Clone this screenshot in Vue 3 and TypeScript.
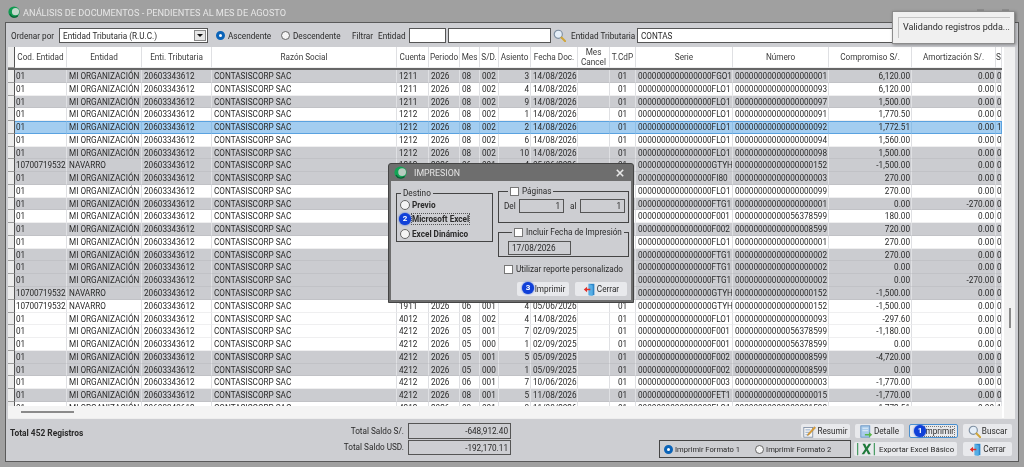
<template>
  <div class="screen">
    <header class="titlebar">
      <svg class="logo" viewBox="0 0 16 16" width="12" height="12">
        <circle cx="8" cy="8" r="7.5" fill="#0f9a50" />
        <circle cx="10" cy="7.500" r="4.800" fill="#c4d8cc" />
        <path d="M2.500 11a6.500 6.500 0 0 0 10.500 2" fill="none" stroke="#0b5f34" stroke-width="1.600" />
      </svg>
      <span class="title-text">ANÁLISIS DE DOCUMENTOS - PENDIENTES AL MES DE AGOSTO</span>
      <span class="ghost-controls"><i /><i /></span>
    </header>

    <div class="window">
      <div class="toolbar">
        <span class="lbl order-lbl">Ordenar por</span>
        <div class="combo">
          <span>Entidad Tributaria (R.U.C.)</span>
          <span class="combo-btn"><i /></span>
        </div>
        <label class="radio-item asc"><span class="radio on" />Ascendente</label>
        <label class="radio-item desc"><span class="radio" />Descendente</label>
        <span class="lbl filter-lbl">Filtrar</span>
        <span class="lbl entity-lbl">Entidad</span>
        <div class="input code-input" />
        <div class="input name-input" />
        <svg class="search-icon" viewBox="0 0 16 16" width="13" height="13">
          <circle cx="6.5" cy="6.5" r="5" fill="#e4eef8" stroke="#7d8ea0" stroke-width="1.4" />
          <path d="M10.5 10.5 15 15" stroke="#d0a63a" stroke-width="2.4" stroke-linecap="round" />
        </svg>
        <span class="lbl tax-lbl">Entidad Tributaria</span>
        <div class="input tax-input">CONTAS</div>
      </div>

      <div class="grid">
        <div class="grid-main">
          <div class="grid-row head" :style="{ gridTemplateColumns: colTemplate }">
            <div class="cell stub" />
            <div v-for="col in columns" :key="col.title" class="cell head-cell">{{ col.title }}</div>
          </div>
          <div class="grid-body">
            <div
              v-for="(row, i) in rows"
              :key="i"
              class="grid-row"
              :class="row.kind"
              :style="{ gridTemplateColumns: colTemplate }"
            >
              <div class="cell stub" />
              <div
                v-for="(value, c) in row.cells"
                :key="c"
                class="cell"
                :class="{ right: columns[c].right, center: columns[c].center, tight: c === 0 || c === 16 }"
              >{{ value }}</div>
            </div>
          </div>
          <div class="hscroll"><i /></div>
        </div>
        <div class="vscroll"><i /></div>
      </div>

      <footer class="footer">
        <div class="count">Total 452 Registros</div>
        <div class="totals">
          <span class="total-lbl">Total Saldo S/.</span>
          <span class="total-val">-648,912.40</span>
          <span class="total-lbl">Total Saldo USD.</span>
          <span class="total-val">-192,170.11</span>
        </div>
        <div class="actions">
          <div class="action-row">
            <button class="btn">
              <svg viewBox="0 0 16 16" width="13" height="13">
                <rect x="1" y="3" width="11" height="12" fill="#f5f5f5" stroke="#7a8aa0" />
                <path d="M3 6h6M3 9h5M3 12h4" stroke="#7f9cc0" />
                <path d="M6 11 14 2l1.5 1.5L7.5 12 5.5 13z" fill="#e0a030" stroke="#a06a18" stroke-width=".5" />
              </svg>
              Resumir
            </button>
            <button class="btn">
              <svg viewBox="0 0 16 16" width="13" height="13">
                <rect x="1" y="1" width="11" height="14" fill="#a9cbea" stroke="#5c8cc0" />
                <path d="M3 4h7M3 7h7" stroke="#eaf3fb" />
                <path d="M6 11h5V8.5l4 3.5-4 3.5V13H6z" fill="#59b64a" />
              </svg>
              Detalle
            </button>
            <button class="btn active">
              <span class="badge main-badge">1</span>
              <span class="focus-lbl">Imprimir</span>
            </button>
            <button class="btn">
              <svg viewBox="0 0 16 16" width="13" height="13">
                <circle cx="6.5" cy="6.5" r="5" fill="#e4eef8" stroke="#7d8ea0" stroke-width="1.4" />
                <path d="M10.5 10.5 15 15" stroke="#d0a63a" stroke-width="2.4" stroke-linecap="round" />
              </svg>
              Buscar
            </button>
          </div>
          <div class="action-row second">
            <div class="format-box">
              <label class="radio-item"><span class="radio on" />Imprimir Formato 1</label>
              <label class="radio-item"><span class="radio" />Imprimir Formato 2</label>
            </div>
            <button class="btn export">
              <svg viewBox="0 0 22 16" width="20" height="14">
                <path d="M1.5 1v14M20.500 1v14" stroke="#2f8f4e" stroke-width="1.2" />
                <path d="M6 14 10 8 7 2h3l1.6 3.6L14.2 2H17l-4 6 3.400 6h-3l-1.900-4-2.600 4z" fill="#1f7a3c" />
              </svg>
              Exportar Excel Básico
            </button>
            <button class="btn">
              <svg viewBox="0 0 16 16" width="13" height="13">
                <path d="M7 1h7v14H7z" fill="#2e86c8" />
                <path d="M7 1l5 2v13l-5-1z" fill="#55aee6" />
                <path d="M1 8l4-3.500V7h4v2H5v2.500z" fill="#e0302a" />
              </svg>
              Cerrar
            </button>
          </div>
        </div>
      </footer>
    </div>

    <div class="toast">
      <div class="toast-inner">Validando registros pdda...</div>
    </div>

    <section class="dialog">
      <header class="dialog-title">
        <svg viewBox="0 0 16 16" width="13" height="13">
          <circle cx="8" cy="8" r="7.5" fill="#12a455" />
          <circle cx="10" cy="7.500" r="4.800" fill="#b8ccc0" />
          <path d="M2.500 11a6.500 6.500 0 0 0 10.500 2" fill="none" stroke="#0b5f34" stroke-width="1.600" />
        </svg>
        <span>IMPRESION</span>
        <svg class="close-x" viewBox="0 0 10 10" width="8" height="8">
          <path d="M1 1l8 8M9 1l-8 8" stroke="#e8e8e8" stroke-width="2" />
        </svg>
      </header>
      <div class="dialog-body">
        <fieldset class="group destino">
          <legend>Destino</legend>
          <label class="dlg-radio"><span class="radio big" />Previo</label>
          <label class="dlg-radio">
            <span class="badge dlg-badge-2">2</span>
            <span class="radio big" /><span class="dotted">Microsoft Excel</span>
          </label>
          <label class="dlg-radio"><span class="radio big" />Excel Dinámico</label>
        </fieldset>

        <div class="dialog-right">
          <fieldset class="group pages">
            <legend><span class="check" />Páginas</legend>
            <div class="pages-row">
              <span class="del">Del</span>
              <span class="dlg-input num">1</span>
              <span class="al">al</span>
              <span class="dlg-input num">1</span>
            </div>
          </fieldset>
          <fieldset class="group date">
            <legend><span class="check" />Incluir Fecha de Impresión</legend>
            <span class="dlg-input date-input">17/08/2026</span>
          </fieldset>
          <label class="custom"><span class="check" />Utilizar reporte personalizado</label>
          <div class="dialog-actions">
            <button class="btn dlg-btn">
              <span class="badge dlg-badge-3">3</span>
              <span class="print-lbl">Imprimir</span>
            </button>
            <button class="btn dlg-btn">
              <svg viewBox="0 0 16 16" width="13" height="13">
                <path d="M7 1h7v14H7z" fill="#2e86c8" />
                <path d="M7 1l5 2v13l-5-1z" fill="#55aee6" />
                <path d="M1 8l4-3.500V7h4v2H5v2.500z" fill="#e0302a" />
              </svg>
              Cerrar
            </button>
          </div>
        </div>
      </div>
    </section>
  </div>
</template>

<script setup lang="ts">
interface Column {
  title: string
  width: number
  right?: boolean
  center?: boolean
}

interface Row {
  kind: string
  cells: string[]
}

const columns: Column[] = [
  { title: 'Cod. Entidad', width: 52 },
  { title: 'Entidad', width: 75 },
  { title: 'Enti. Tributaria', width: 70 },
  { title: 'Razón Social', width: 185 },
  { title: 'Cuenta', width: 32 },
  { title: 'Periodo', width: 31 },
  { title: 'Mes', width: 20 },
  { title: 'S/D.', width: 19 },
  { title: 'Asiento', width: 32, right: true },
  { title: 'Fecha Doc.', width: 47 },
  { title: 'Mes Cancel', width: 32 },
  { title: 'T.CdP', width: 26, center: true },
  { title: 'Serie', width: 97 },
  { title: 'Número', width: 96 },
  { title: 'Compromiso S/.', width: 83, right: true },
  { title: 'Amortización S/.', width: 84, right: true },
  { title: 'S', width: 6 },
]

const colTemplate = '7px ' + columns.map((c) => c.width + 'px').join(' ')

const SERIE_ZEROS = '0000000000000000'
const NUM_ZEROS = '0000000000000000000'

// kind, navarro?, cuenta, mes, s/d, asiento, fecha, serie, numero, compromiso, amortizacion, s
type Raw = [string, boolean, string, string, string, string, string, string, string, string, string, string]

const raw: Raw[] = [
  ['gray', false, '1211', '08', '002', '3', '14/08/2026', 'FGO1', '1', '6,120.00', '0.00', '0'],
  ['white', false, '1211', '08', '002', '4', '14/08/2026', 'FLO1', '93', '6,120.00', '0.00', '0'],
  ['gray', false, '1211', '08', '002', '9', '14/08/2026', 'FLO1', '97', '1,500.00', '0.00', '0'],
  ['white', false, '1212', '08', '002', '1', '14/08/2026', 'FLO1', '91', '1,770.50', '0.00', '0'],
  ['selected', false, '1212', '08', '002', '2', '14/08/2026', 'FLO1', '92', '1,772.51', '0.00', '1'],
  ['white', false, '1212', '08', '002', '6', '14/08/2026', 'FLO1', '94', '1,560.00', '0.00', '0'],
  ['gray', false, '1212', '08', '002', '10', '14/08/2026', 'FLO1', '98', '1,500.00', '0.00', '0'],
  ['gray', true, '1212', '06', '001', '4', '05/06/2026', 'GTYH', '152', '-1,500.00', '0.00', '0'],
  ['gray', false, '1212', '08', '001', '2', '14/08/2026', 'FI80', '3', '270.00', '0.00', '0'],
  ['white', false, '1212', '08', '002', '5', '14/08/2026', 'FLO1', '99', '270.00', '0.00', '0'],
  ['gray', false, '1212', '08', '001', '3', '14/08/2026', 'FTG1', '1', '0.00', '-270.00', '0'],
  ['white', false, '1212', '05', '001', '7', '02/09/2025', 'F001', '56378599', '180.00', '0.00', '0'],
  ['gray', false, '1212', '05', '001', '5', '05/09/2025', 'F002', '8599', '720.00', '0.00', '0'],
  ['white', false, '1212', '08', '002', '8', '14/08/2026', 'FLO1', '1', '270.00', '0.00', '0'],
  ['gray', false, '1212', '08', '001', '6', '14/08/2026', 'FTG1', '2', '270.00', '0.00', '0'],
  ['gray', false, '1212', '08', '000', '1', '14/08/2026', 'FTG1', '2', '0.00', '0.00', '0'],
  ['gray', false, '1212', '08', '001', '7', '14/08/2026', 'FTG1', '2', '0.00', '-270.00', '0'],
  ['gray', true, '1911', '06', '001', '3', '05/06/2026', 'GTYH', '152', '-1,500.00', '0.00', '0'],
  ['white', true, '1911', '06', '001', '4', '05/06/2026', 'GTYH', '152', '-1,500.00', '0.00', '0'],
  ['white', false, '4012', '08', '002', '4', '14/08/2026', 'FLO1', '93', '-297.60', '0.00', '0'],
  ['white', false, '4212', '05', '001', '7', '02/09/2025', 'F001', '56378599', '-1,180.00', '0.00', '0'],
  ['white', false, '4212', '05', '000', '1', '02/09/2025', 'F001', '56378599', '0.00', '0.00', '0'],
  ['gray', false, '4212', '05', '001', '5', '05/09/2025', 'F002', '8599', '-4,720.00', '0.00', '0'],
  ['gray', false, '4212', '05', '000', '1', '05/09/2025', 'F002', '8599', '0.00', '0.00', '0'],
  ['white', false, '4212', '06', '001', '7', '10/06/2026', 'F003', '3', '-1,770.00', '0.00', '0'],
  ['gray', false, '4212', '08', '001', '5', '11/08/2026', 'FET1', '15', '-1,770.00', '0.00', '0'],
  ['white', false, '4212', '08', '001', '8', '11/08/2026', 'FLO1', '1598', '-1,772.51', '0.00', '1'],
]

const rows: Row[] = raw.map((r) => ({
  kind: r[0],
  cells: [
    r[1] ? '10700719532' : '01',
    r[1] ? 'NAVARRO' : 'MI ORGANIZACIÓN',
    '20603343612',
    'CONTASISCORP SAC',
    r[2],
    '2026',
    r[3],
    r[4],
    r[5],
    r[6],
    '',
    '01',
    SERIE_ZEROS + r[7],
    (NUM_ZEROS + r[8]).slice(-20),
    r[9],
    r[10],
    r[11],
  ],
}))
</script>

<style>
html,
body {
  margin: 0;
  padding: 0;
}
</style>

<style scoped>
.screen {
  position: relative;
  box-sizing: border-box;
  width: 1024px;
  height: 467px;
  padding: 0 5px 5px 5px;
  display: flex;
  flex-direction: column;
  overflow: hidden;
  background: #a0a0a0;
  font-family: Roboto, "Liberation Sans", Arial, sans-serif;
  font-size: 8.2px;
  color: #2a2a2a;
  filter: blur(0.3px);
}

.titlebar {
  height: 22px;
  flex-shrink: 0;
  display: flex;
  align-items: center;
  gap: 3px;
  padding: 2px 0 0 3px;
  box-sizing: border-box;
}

.title-text {
  color: #e6e6e6;
  font-size: 9.2px;
  white-space: nowrap;
}

.ghost-controls {
  margin-left: auto;
  display: flex;
  gap: 18px;
  margin-right: 10px;
  align-self: flex-start;
  padding-top: 7px;
}

.ghost-controls i {
  width: 7px;
  height: 3px;
  background: #8e8e8e;
}

.window {
  flex: 1;
  min-height: 0;
  display: flex;
  flex-direction: column;
  background: #cdced2;
  border: 1px solid #5a5a5a;
}

.toolbar {
  height: 24px;
  flex-shrink: 0;
  display: flex;
  align-items: center;
  padding: 1px 0 0 5px;
  box-sizing: border-box;
}

.lbl {
  white-space: nowrap;
}

.order-lbl {
  width: 43px;
}

.combo {
  width: 149px;
  height: 15px;
  margin-left: 5px;
  box-sizing: border-box;
  background: #fff;
  border: 1px solid #555;
  display: flex;
  align-items: center;
  justify-content: space-between;
  padding-left: 3px;
}

.combo-btn {
  width: 12px;
  height: 11px;
  margin-right: 1px;
  background: #e6e6e6;
  border: 1px solid #888;
  box-sizing: border-box;
  display: flex;
  align-items: center;
  justify-content: center;
}

.combo-btn i {
  border-left: 3px solid transparent;
  border-right: 3px solid transparent;
  border-top: 3px solid #111;
}

.radio-item {
  display: inline-flex;
  align-items: center;
  gap: 3px;
  white-space: nowrap;
}

.radio {
  width: 9px;
  height: 9px;
  box-sizing: border-box;
  flex-shrink: 0;
  border-radius: 50%;
  background: #f4f4f4;
  border: 1px solid #666;
}

.radio.on {
  background: #fff;
  border: 3px solid #0a63b8;
}

.radio.big {
  width: 10px;
  height: 10px;
}

.asc {
  width: 56px;
  margin-left: 8px;
}

.desc {
  width: 60px;
  margin-left: 9px;
}

.filter-lbl {
  width: 20px;
  margin-left: 11px;
}

.entity-lbl {
  width: 26px;
  margin-left: 6px;
}

.input {
  height: 15px;
  box-sizing: border-box;
  background: #fff;
  border: 1px solid #555;
}

.code-input {
  width: 37px;
  margin-left: 5px;
}

.name-input {
  width: 103px;
  margin-left: 2px;
}

.search-icon {
  margin-left: 2px;
}

.tax-lbl {
  width: 62px;
  margin-left: 5px;
}

.tax-input {
  flex: 1;
  margin: 0 3px 0 4px;
  padding: 1px 3px;
  line-height: 12px;
}

.grid {
  height: 371px;
  flex-shrink: 0;
  margin: 0 3px 0 2px;
  display: flex;
  background: #f2f2f2;
  border-bottom: 1px solid #eee;
}

.grid-main {
  width: 994px;
  flex-shrink: 0;
  display: flex;
  flex-direction: column;
}

.grid-row {
  display: grid;
  height: 12.77px;
  flex-shrink: 0;
  background: #fff;
  box-sizing: border-box;
}

.grid-row.gray {
  background: #cbccd0;
}

.grid-row.selected {
  background: #a3cdf0;
}

.grid-row.selected .cell:not(.stub) {
  border-top: 1px solid #5aa2e0;
  border-bottom: 1px solid #5aa2e0;
  border-right-color: #8fbfe6;
  line-height: 10.5px;
}

.grid-row.selected .cell:last-child {
  border-right-color: #5aa2e0;
}

.grid-row.head {
  height: 23px;
  border-bottom: 2px solid #666;
}

.grid-body {
  height: 336px;
  overflow: hidden;
  background: #fff;
}

.cell {
  padding: 0 0 0 2px;
  line-height: 12.5px;
  white-space: nowrap;
  overflow: hidden;
  border-right: 1px solid #dfe0e3;
  border-bottom: 1px solid rgba(120, 120, 130, 0.12);
  box-sizing: border-box;
}

.cell.right {
  text-align: right;
  padding: 0 1px 0 0;
}

.cell.center {
  text-align: center;
  padding: 0;
}

.cell.tight {
  padding-left: 1px;
  letter-spacing: -0.1px;
}

.stub {
  background: #ececec;
  padding: 0;
  border-right: 1px solid #555;
  border-bottom: 1px solid #9a9a9a;
}

.head-cell {
  display: flex;
  align-items: center;
  justify-content: center;
  text-align: center;
  white-space: normal;
  padding: 0;
  line-height: 10px;
  color: #3c3c3c;
}

.hscroll {
  flex: 1;
  padding: 5px 0 0 13px;
  background: #f4f4f4;
}

.hscroll i {
  display: block;
  width: 53px;
  height: 2px;
  background: #8a8a8a;
}

.vscroll {
  flex: 1;
  padding: 261px 0 0 5px;
  background: #f1f1f1;
  border-left: 2px solid #fff;
  box-sizing: border-box;
}

.vscroll i {
  display: block;
  width: 2px;
  height: 20px;
  background: #8a8a8a;
}

.footer {
  flex: 1;
  display: flex;
  padding: 4px 6px 0 4px;
  min-height: 0;
}

.count {
  width: 300px;
  flex-shrink: 0;
  padding-top: 5px;
  font-weight: 700;
  font-size: 8.4px;
}

.totals {
  display: grid;
  grid-template-columns: 94px 103px;
  grid-auto-rows: 15.5px;
  column-gap: 4px;
  row-gap: 1px;
  align-items: center;
}

.total-lbl {
  text-align: right;
}

.total-val {
  box-sizing: border-box;
  height: 100%;
  border: 1px solid #555;
  text-align: right;
  padding: 1px 2px;
  line-height: 12px;
}

.actions {
  margin-left: auto;
  display: flex;
  flex-direction: column;
  gap: 2px;
  padding-top: 1px;
}

.action-row {
  display: flex;
  justify-content: flex-end;
  gap: 5px;
  height: 14px;
}

.action-row.second {
  height: 18px;
  align-items: center;
  gap: 3px;
}

.btn {
  position: relative;
  width: 49px;
  height: 14px;
  padding: 0;
  display: flex;
  align-items: center;
  justify-content: center;
  gap: 1px;
  border: none;
  border-radius: 2px;
  background: #e8e9ec;
  font: inherit;
  color: inherit;
  white-space: nowrap;
}

.btn.active {
  border: 1px solid #4a90d0;
  justify-content: flex-end;
  padding-right: 3px;
  box-sizing: border-box;
}

.focus-lbl {
  outline: 1px dotted #777;
  line-height: 9px;
}

.format-box {
  box-sizing: border-box;
  width: 192px;
  height: 18px;
  border: 1px solid #444;
  display: flex;
  align-items: center;
  gap: 15px;
  padding-left: 4px;
  font-size: 7.6px;
}

.format-box .radio-item {
  gap: 2px;
}

.btn.export {
  width: 103px;
  justify-content: flex-start;
  padding-left: 2px;
  gap: 3px;
  font-size: 7.8px;
}

.action-row.second .btn:last-child {
  margin-left: 3px;
}

.badge {
  position: absolute;
  width: 12px;
  height: 12px;
  border-radius: 50%;
  background: #1040d8;
  box-shadow: 0 0 2px #1040d8;
  color: #fff;
  font-size: 8px;
  font-weight: 700;
  line-height: 12px;
  text-align: center;
}

.main-badge {
  left: 4px;
  top: 0;
}

.toast {
  position: absolute;
  left: 892px;
  top: 11px;
  width: 123px;
  height: 33px;
  box-sizing: border-box;
  padding: 5px 4px 5px 5px;
  background: #f0f0f0;
  border: 1px solid #8c8c8c;
  box-shadow: 1px 1px 3px rgba(0, 0, 0, 0.35);
}

.toast-inner {
  height: 100%;
  box-sizing: border-box;
  border: 1px solid #c4c4c4;
  border-bottom: none;
  border-right: none;
  padding-left: 4px;
  line-height: 18px;
  font-size: 9px;
  white-space: nowrap;
  overflow: hidden;
}

.dialog {
  position: absolute;
  left: 388px;
  top: 163px;
  width: 246px;
  height: 140px;
  box-sizing: border-box;
  display: flex;
  flex-direction: column;
  background: #6e6e6e;
  border: 1px solid #444;
  border-radius: 3px 3px 0 0;
  padding: 0 2px 2px;
}

.dialog-title {
  height: 17px;
  flex-shrink: 0;
  display: flex;
  align-items: center;
  gap: 7px;
  padding-left: 3px;
  color: #e4e4e4;
  font-size: 8.8px;
}

.close-x {
  margin-left: auto;
  margin-right: 7px;
}

.dialog-body {
  flex: 1;
  min-height: 0;
  display: flex;
  gap: 5px;
  padding: 3px 2px 0 5px;
  background: #cdced2;
}

.group {
  margin: 0;
  padding: 0;
  min-width: 0;
  box-sizing: border-box;
  border: 1px solid #444;
}

.group legend {
  padding: 0 2px;
  margin-left: 4px;
  line-height: 9px;
  display: flex;
  align-items: center;
  gap: 3px;
}

.destino {
  flex-shrink: 0;
  width: 97px;
  height: 53px;
  margin-top: 5px;
  display: flex;
  flex-direction: column;
}

.dlg-radio {
  position: relative;
  height: 14.5px;
  display: flex;
  align-items: center;
  gap: 2px;
  padding-left: 3px;
  font-weight: 700;
}

.dotted {
  outline: 1px dotted #555;
  line-height: 10px;
}

.dlg-badge-2 {
  left: 2px;
  top: 1px;
}

.dialog-right {
  flex: 1;
  min-width: 0;
  display: flex;
  flex-direction: column;
  padding-top: 3px;
}

.check {
  display: inline-block;
  width: 9px;
  height: 9px;
  box-sizing: border-box;
  background: #fff;
  border: 1px solid #777;
  flex-shrink: 0;
}

.pages {
  height: 36px;
  padding: 3px 0 0 5px;
}

.pages-row {
  display: flex;
  align-items: center;
  gap: 2px;
}

.del {
  width: 13px;
}

.al {
  width: 7px;
  margin: 0 1px 0 4px;
}

.dlg-input {
  display: block;
  box-sizing: border-box;
  height: 14px;
  border: 1px solid #555;
  line-height: 12px;
  padding: 0 3px;
}

.num {
  width: 45px;
  text-align: right;
}

.date {
  height: 29px;
  margin-top: 5px;
  padding: 4px 0 0 9px;
}

.date-input {
  width: 63px;
}

.custom {
  display: flex;
  align-items: center;
  gap: 3px;
  margin: 7px 0 0 6px;
}

.dialog-actions {
  display: flex;
  justify-content: flex-end;
  gap: 6px;
  margin: 8px 2px 0 0;
}

.dlg-btn {
  width: 52px;
}

.print-lbl {
  padding-left: 14px;
}

.dlg-badge-3 {
  left: 5px;
  top: 0;
}
</style>
